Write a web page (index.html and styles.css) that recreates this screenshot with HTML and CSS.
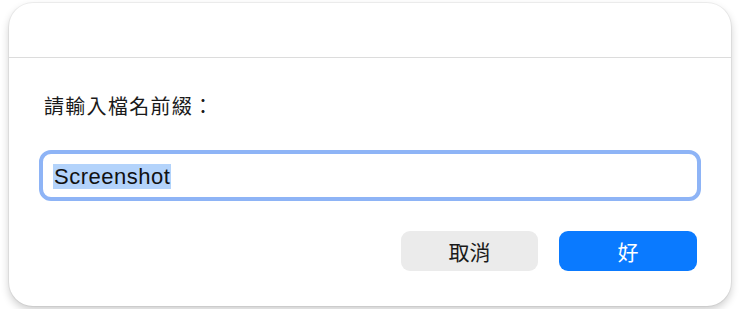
FILE: index.html
```html
<!DOCTYPE html>
<html lang="zh-Hant">
<head>
    <meta charset="UTF-8">
    <title>檔名前綴</title>
    <link rel="stylesheet" href="styles.css">
</head>
<body>

<div class="dialog">
    <div class="dialog-header"></div>

    <div class="dialog-body">
        <p class="prompt">請輸入檔名前綴：</p>

        <div class="field">
            <span class="selected">Screenshot</span>
        </div>

        <div class="actions">
            <button class="btn btn-cancel">取消</button>
            <button class="btn btn-ok">好</button>
        </div>
    </div>
</div>

</body>
</html>
```

FILE: styles.css
```css
body {
    margin: 0;
    background: #fff;
    font-family: "Noto Sans CJK TC", "Noto Sans", sans-serif;
    color: #1d1d1f;
}

/* dialog box */
.dialog {
    margin: 3px 9px;
    height: 303px;
    background: #fff;
    border-radius: 24px;
    box-shadow: 0 0 0 1px rgba(0,0,0,0.05), 0 4px 9px rgba(0,0,0,0.2);
    overflow: hidden;
}

.dialog-header {
    height: 54px;
    border-bottom: 1px solid #dcdcdc;
}

.dialog-body {
    padding: 35px 30px 0 30px;
}

.prompt {
    margin: 0 0 31px 5px;
    font-size: 20px;
    line-height: 26px;
    letter-spacing: 1.3px;
    color: #1a1a1a;
}

/* text field with focus ring */
.field {
    height: 43px;
    border: 4px solid #8eb4f6;
    border-radius: 12px;
    display: flex;
    align-items: center;
    padding-left: 10px;
}

.selected {
    font-family: "Liberation Sans", Arial, sans-serif;
    font-size: 22px;
    line-height: 25px;
    letter-spacing: 0.5px;
    background: #b3d3fb;
    color: #111;
    padding: 0 1px;
    margin-top: 2px;
}

.actions {
    display: flex;
    justify-content: flex-end;
    gap: 21px;
    margin-top: 30px;
    padding-right: 4px;
}

.btn {
    width: 138px;
    height: 40px;
    border: none;
    border-radius: 9px;
    font-family: "Noto Sans CJK TC", sans-serif;
    font-size: 21px;
    cursor: pointer;
}

.btn-cancel {
    width: 137px;
    background: #ebebeb;
    color: #1a1a1a;
}

.btn-ok {
    background: #0a7aff;
    color: #fff;
}
```
